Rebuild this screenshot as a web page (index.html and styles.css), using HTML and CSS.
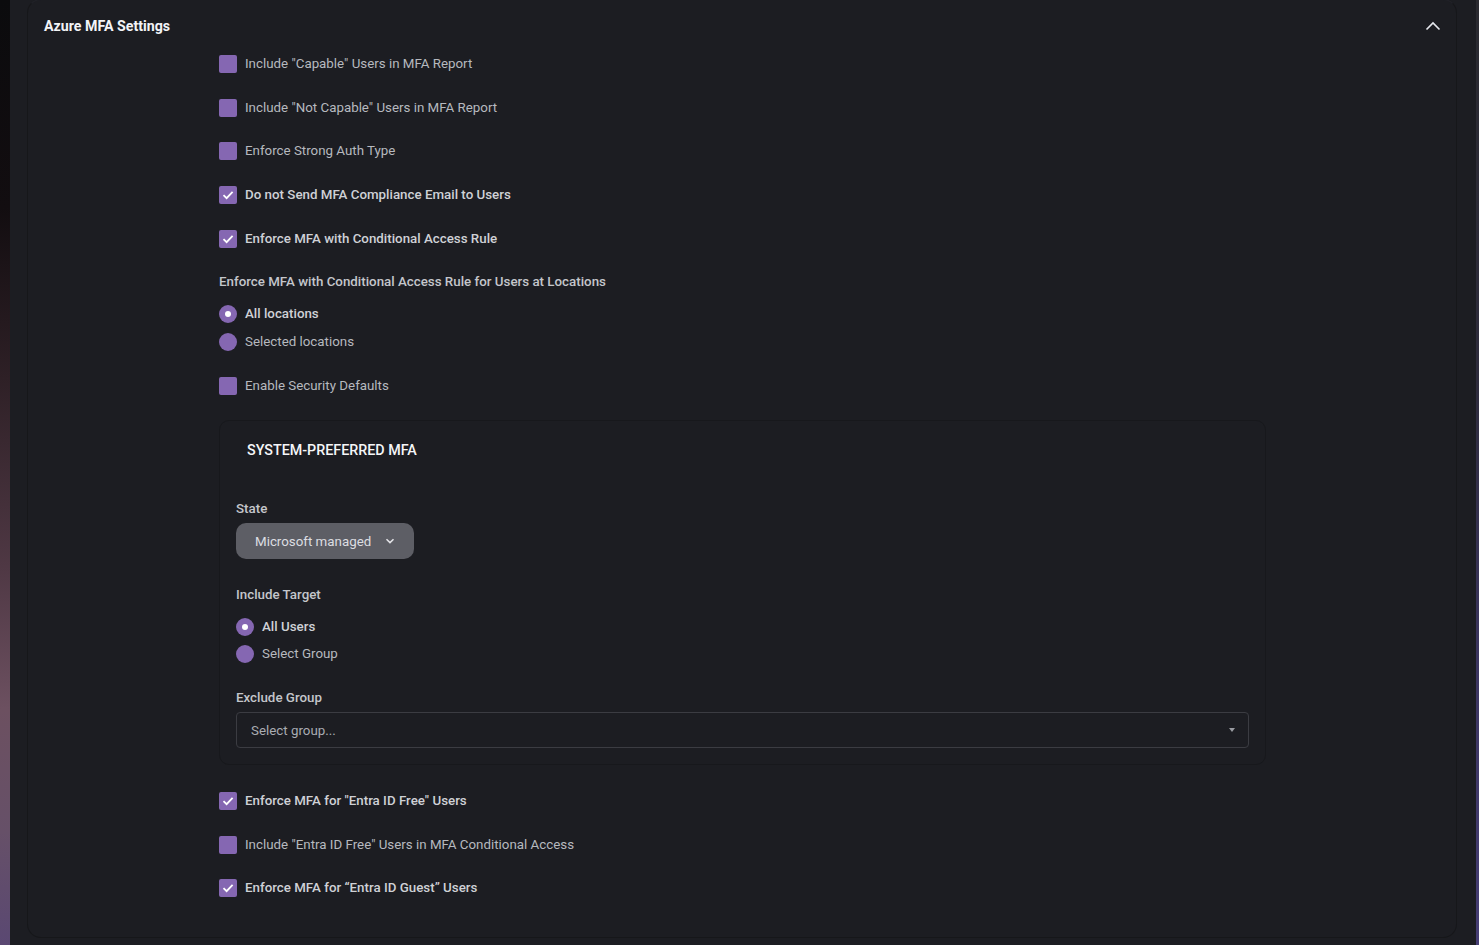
FILE: index.html
```html
<!DOCTYPE html>
<html lang="en">
<head>
<meta charset="utf-8">
<title>Azure MFA Settings</title>
<link rel="stylesheet" href="styles.css">
</head>
<body>
<div class="strip-left"></div>
<main class="main">
  <section class="panel">
    <header class="panel-header">
      <h2 class="panel-title">Azure MFA Settings</h2>
      <svg class="chev-up" width="16" height="10" viewBox="0 0 16 10"><path d="M1.5 8.5 L8 2 L14.5 8.5" fill="none" stroke="#e6e8ee" stroke-width="1.6"/></svg>
    </header>
    <div class="panel-body">
      <label class="cb-row r-first"><span class="cb"></span><span class="cb-label">Include "Capable" Users in MFA Report</span></label>
      <label class="cb-row r-next"><span class="cb"></span><span class="cb-label">Include "Not Capable" Users in MFA Report</span></label>
      <label class="cb-row r-tight"><span class="cb"></span><span class="cb-label">Enforce Strong Auth Type</span></label>
      <label class="cb-row r-next"><span class="cb checked"><svg viewBox="0 0 18 18" width="18" height="18"><path d="M4.5 9.2 L7.6 12.2 L13.6 5.8" fill="none" stroke="#fff" stroke-width="1.8"/></svg></span><span class="cb-label on">Do not Send MFA Compliance Email to Users</span></label>
      <label class="cb-row r-next"><span class="cb checked"><svg viewBox="0 0 18 18" width="18" height="18"><path d="M4.5 9.2 L7.6 12.2 L13.6 5.8" fill="none" stroke="#fff" stroke-width="1.8"/></svg></span><span class="cb-label on">Enforce MFA with Conditional Access Rule</span></label>

      <div class="field-title loc-title">Enforce MFA with Conditional Access Rule for Users at Locations</div>
      <label class="rd-row rd-first"><span class="rd checked"></span><span class="cb-label on">All locations</span></label>
      <label class="rd-row rd-next"><span class="rd"></span><span class="cb-label">Selected locations</span></label>

      <label class="cb-row r-next"><span class="cb"></span><span class="cb-label">Enable Security Defaults</span></label>

      <div class="card">
        <div class="card-title">SYSTEM-PREFERRED MFA</div>
        <div class="field-title state-title">State</div>
        <button class="dropdown" type="button">Microsoft managed
          <svg width="10" height="6" viewBox="0 0 10 6"><path d="M1.5 1.2 L5 4.6 L8.5 1.2" fill="none" stroke="#e4e4e8" stroke-width="1.5"/></svg>
        </button>
        <div class="field-title target-title">Include Target</div>
        <label class="rd-row rd-first"><span class="rd checked"></span><span class="cb-label on">All Users</span></label>
        <label class="rd-row rd-next2"><span class="rd"></span><span class="cb-label">Select Group</span></label>
        <div class="field-title exclude-title">Exclude Group</div>
        <div class="select">
          <span class="placeholder">Select group...</span>
          <span class="caret"></span>
        </div>
      </div>

      <label class="cb-row r-after-card"><span class="cb checked"><svg viewBox="0 0 18 18" width="18" height="18"><path d="M4.5 9.2 L7.6 12.2 L13.6 5.8" fill="none" stroke="#fff" stroke-width="1.8"/></svg></span><span class="cb-label on">Enforce MFA for "Entra ID Free" Users</span></label>
      <label class="cb-row r-next"><span class="cb"></span><span class="cb-label">Include "Entra ID Free" Users in MFA Conditional Access</span></label>
      <label class="cb-row r-tight"><span class="cb checked"><svg viewBox="0 0 18 18" width="18" height="18"><path d="M4.5 9.2 L7.6 12.2 L13.6 5.8" fill="none" stroke="#fff" stroke-width="1.8"/></svg></span><span class="cb-label on">Enforce MFA for “Entra ID Guest” Users</span></label>
    </div>
  </section>
</main>
<div class="strip-right"></div>
</body>
</html>
```

FILE: styles.css
```css
* { box-sizing: border-box; }
html, body { margin: 0; padding: 0; }
body {
  display: flex;
  width: 1479px;
  height: 945px;
  overflow: hidden;
  background: #1c1d22;
  font-family: Roboto, "Liberation Sans", Arial, sans-serif;
  color: #b9bcc2;
}
.strip-left {
  width: 10px;
  flex: none;
  background: linear-gradient(180deg, #0b0b0d 0%, #120d10 22%, #2e2026 40%, #4f3844 60%, #6c5060 75%, #665068 88%, #5a4872 100%);
}
.strip-right {
  width: 3px;
  flex: none;
  background: linear-gradient(180deg, #2a2a30 0%, #2e2c3c 40%, #3c3660 70%, #463e74 100%);
}
.main {
  flex: 1;
  background: #1c1d22;
  padding: 0 19px 0 17px;
}
.panel {
  height: 939px;
  border: 1px solid #16171a;
  border-top-color: #212228;
  border-radius: 14px;
  margin-top: -1px;
  background: #1c1d22;
}
.panel-header {
  height: 52px;
  display: flex;
  align-items: center;
  justify-content: space-between;
  padding: 0 15px 0 16px;
}
.panel-title {
  margin: 0;
  font-size: 14.2px;
  font-weight: 700;
  color: #f3f4f7;
}
.chev-up { display: block; }
.panel-body {
  display: flex;
  flex-direction: column;
  align-items: flex-start;
  padding-left: 191px;
}
.cb-row, .rd-row {
  display: flex;
  align-items: center;
  gap: 8px;
  height: 18px;
  cursor: pointer;
}
.r-first { margin-top: 3px; }
.r-next { margin-top: 26px; }
.r-tight { margin-top: 25px; }
.r-after-card { margin-top: 27px; }
.cb {
  width: 18px;
  height: 18px;
  border-radius: 2px;
  background: #8567b2;
  display: block;
  flex: none;
}
.cb svg { display: block; }
.cb-label {
  font-size: 13.33px;
  line-height: 18px;
  color: #b6b9bf;
  white-space: nowrap;
}
.cb-label.on {
  font-weight: 500;
  color: #cfd1d6;
}
.rd {
  width: 18px;
  height: 18px;
  border-radius: 50%;
  background: #8567b2;
  flex: none;
  display: flex;
  align-items: center;
  justify-content: center;
}
.rd.checked::after {
  content: "";
  width: 6px;
  height: 6px;
  border-radius: 50%;
  background: #ffffff;
}
.field-title {
  font-size: 13.33px;
  line-height: 18px;
  font-weight: 500;
  color: #c4c6cb;
}
.loc-title { margin-top: 25px; }
.rd-first { margin-top: 14px; }
.rd-next { margin-top: 10px; }
.rd-next2 { margin-top: 9px; }
.card {
  margin-top: 25px;
  width: 1047px;
  border: 1px solid #17181c;
  border-radius: 10px;
  padding: 20px 16px 16px 16px;
  display: flex;
  flex-direction: column;
  align-items: flex-start;
  background: #1c1d22;
}
.card-title {
  padding-left: 11px;
  font-size: 14.3px;
  line-height: 18px;
  font-weight: 500;
  color: #f5f6f8;
}
.state-title { margin-top: 41px; }
.dropdown {
  margin-top: 5px;
  height: 36px;
  width: 178px;
  border: none;
  border-radius: 10px;
  background: #5d5e65;
  color: #dcdde1;
  font-family: inherit;
  font-size: 13.33px;
  display: flex;
  align-items: center;
  gap: 10px;
  padding: 0 0 0 19px;
  cursor: pointer;
}
.dropdown svg { display: block; margin-left: 4px; }
.target-title { margin-top: 27px; }
.exclude-title { margin-top: 26px; }
.select {
  margin-top: 5px;
  width: 1013px;
  height: 36px;
  border: 1px solid #3b3c42;
  border-radius: 4px;
  display: flex;
  align-items: center;
  justify-content: space-between;
  padding: 0 13px 0 14px;
}
.placeholder {
  font-size: 13.33px;
  color: #a9acb2;
}
.caret {
  width: 0;
  height: 0;
  border-left: 3px solid transparent;
  border-right: 3px solid transparent;
  border-top: 4px solid #9a9ca2;
}
```
